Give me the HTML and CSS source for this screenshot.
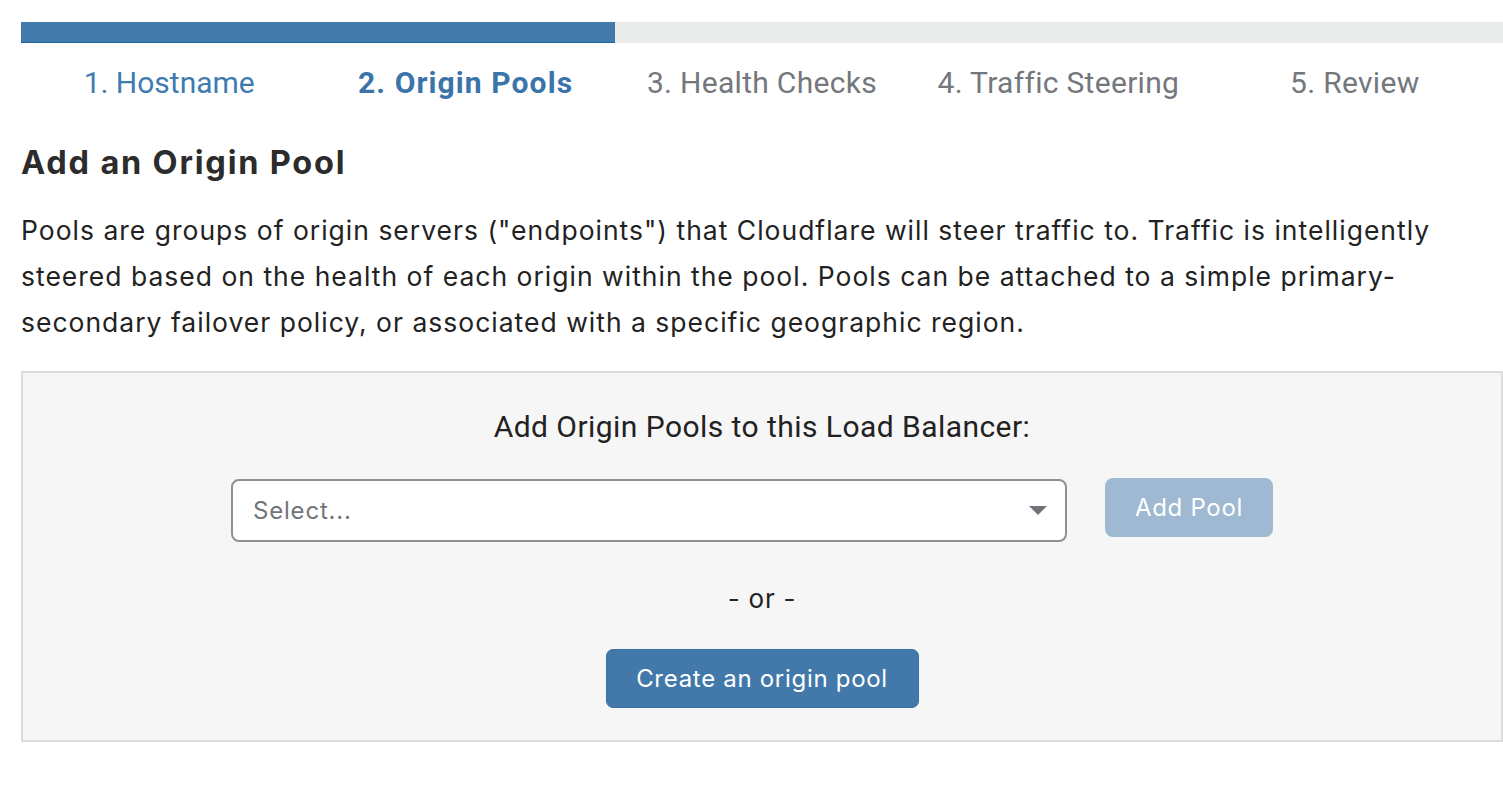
FILE: index.html
```html
<!DOCTYPE html>
<html>
<head>
<meta charset="utf-8">
<link rel="stylesheet" href="styles.css">
</head>
<body>
<div class="page">
  <div class="progress"><div class="progress-fill"></div></div>
  <ol class="steps">
    <li class="step done">1. Hostname</li>
    <li class="step current">2. Origin Pools</li>
    <li class="step">3. Health Checks</li>
    <li class="step">4. Traffic Steering</li>
    <li class="step">5. Review</li>
  </ol>
  <h2 class="title">Add an Origin Pool</h2>
  <p class="intro">Pools are groups of origin servers ("endpoints") that Cloudflare will steer traffic to. Traffic is intelligently steered based on the health of each origin within the pool. Pools can be attached to a simple primary-secondary failover policy, or associated with a specific geographic region.</p>
  <div class="panel">
    <div class="panel-label">Add Origin Pools to this Load Balancer:</div>
    <div class="pick-row">
      <div class="select">
        <span class="placeholder">Select...</span>
        <svg class="caret" width="18" height="9" viewBox="0 0 18 9"><path d="M0 0 H18 L9 9 Z" fill="#6f7378"/></svg>
      </div>
      <button class="btn btn-disabled">Add Pool</button>
    </div>
    <div class="or">- or -</div>
    <button class="btn btn-primary">Create an origin pool</button>
  </div>
</div>
</body>
</html>
```
FILE: styles.css
```css
html, body {
  margin: 0;
  padding: 0;
  background: #ffffff;
}
body {
  font-family: Inter, "Noto Sans", sans-serif;
  color: #222222;
}
.page {
  padding: 22px 0 0 21px;
  width: 1500px;
}
.progress {
  height: 21px;
  background: #e9ebea;
  width: 1482px;
}
.progress-fill {
  width: 594px;
  height: 20px;
  background: #437aac;
  border-bottom: 1px solid #1f66a2;
}
.steps {
  list-style: none;
  margin: 0;
  padding: 0;
  display: grid;
  grid-template-columns: repeat(5, 1fr);
  width: 1482px;
  height: 78px;
  align-items: center;
}
.step {
  text-align: center;
  font-family: Roboto, "Noto Sans", sans-serif;
  font-size: 30px;
  letter-spacing: 0.3px;
  color: #74777b;
}
.step.done {
  color: #3f7bb1;
  letter-spacing: 0;
}
.step.current {
  color: #3a74a8;
  font-weight: 700;
  letter-spacing: 1.1px;
}
.title {
  margin: 22px 0 0 0;
  font-size: 32.5px;
  letter-spacing: 1.8px;
  font-weight: 700;
  color: #2c2c2c;
  line-height: 40px;
}
.intro {
  margin: 24px 0 0 0;
  font-size: 26.5px;
  letter-spacing: 1px;
  line-height: 46px;
  color: #222222;
  width: 1430px;
}
.panel {
  margin-top: 26px;
  width: 1478px;
  height: 367px;
  background: #f6f6f6;
  border: 2px solid #dcdcdc;
  display: flex;
  flex-direction: column;
  align-items: center;
}
.panel-label {
  margin-top: 36px;
  font-family: Roboto, "Noto Sans", sans-serif;
  font-size: 30px;
  letter-spacing: 0.45px;
  line-height: 36px;
  color: #222222;
}
.pick-row {
  margin-top: 34px;
  display: flex;
  align-items: flex-start;
  gap: 38px;
  margin-right: 20px;
}
.select {
  width: 836px;
  height: 63px;
  background: #ffffff;
  border: 2px solid #8d9094;
  border-radius: 8px;
  display: flex;
  align-items: center;
  justify-content: space-between;
  padding: 0 18px 0 20px;
  box-sizing: border-box;
}
.placeholder {
  font-size: 24px;
  letter-spacing: 0.8px;
  color: #72767a;
}
.caret {
  display: block;
}
.btn {
  font-family: Inter, "Noto Sans", sans-serif;
  font-size: 24px;
  letter-spacing: 0.7px;
  color: #ffffff;
  border: none;
  border-radius: 8px;
  cursor: pointer;
  padding: 0;
}
.btn-disabled {
  width: 168px;
  height: 59px;
  background: #9eb9d1;
  margin-top: -1px;
}
.btn-primary {
  margin-top: 32px;
  width: 313px;
  height: 59px;
  background: #4279aa;
  border: 1px solid #3872a6;
  border-radius: 7px;
}
.or {
  margin-top: 39px;
  font-size: 26px;
  letter-spacing: 0.8px;
  line-height: 36px;
  color: #222222;
}
```
